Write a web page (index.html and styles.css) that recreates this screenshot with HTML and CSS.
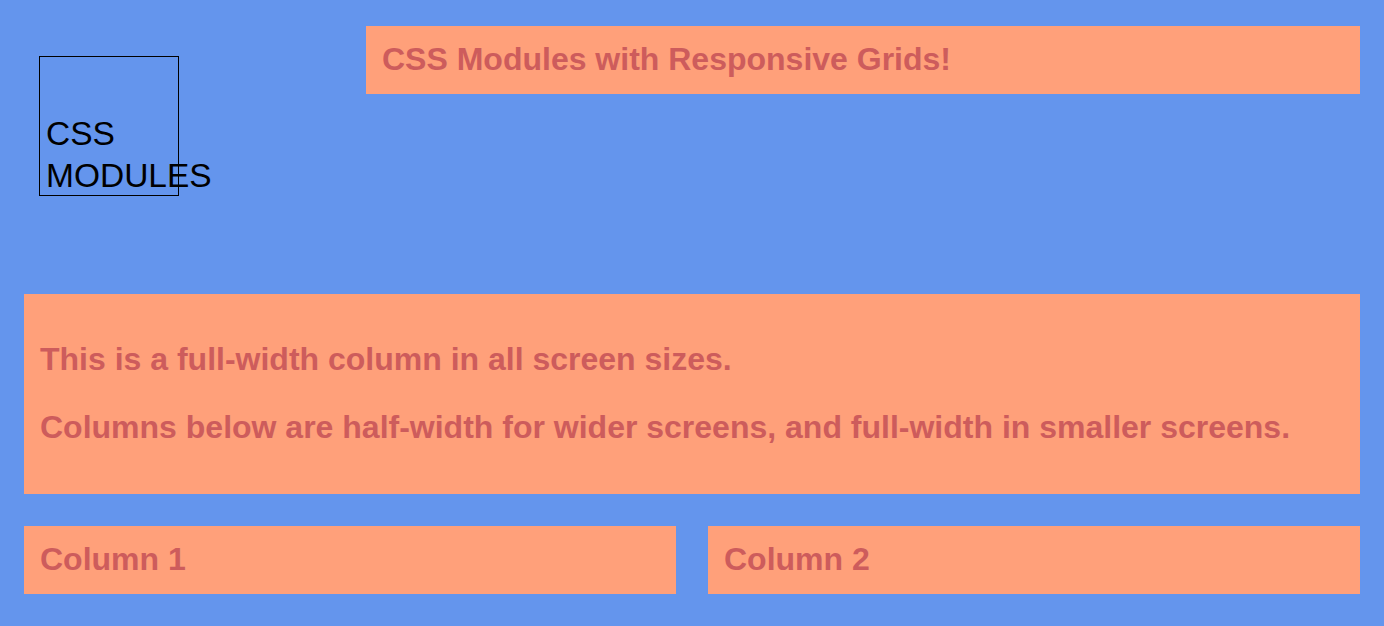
FILE: index.html
```html
<!DOCTYPE html>
<html>
<head>
<meta charset="utf-8">
<link rel="stylesheet" href="styles.css">
</head>
<body>
<div class="page">
  <div class="grid">
    <div class="logo-cell">
      <div class="logo">CSS MODULES</div>
    </div>
    <div class="box header">
      <h1 class="title">CSS Modules with Responsive Grids!</h1>
    </div>
    <div class="box full">
      <p class="text">This is a full-width column in all screen sizes.</p>
      <p class="text">Columns below are half-width for wider screens, and full-width in smaller screens.</p>
    </div>
    <div class="box half">
      <h2 class="title">Column 1</h2>
    </div>
    <div class="box half">
      <h2 class="title">Column 2</h2>
    </div>
  </div>
</div>
</body>
</html>
```
FILE: styles.css
```css
html, body {
  margin: 0;
  padding: 0;
  background: #6495ED;
  font-family: "Liberation Sans", Arial, Helvetica, sans-serif;
}

.page {
  padding: 26px 24px 32px;
}

.grid {
  display: grid;
  grid-template-columns: repeat(12, 1fr);
  column-gap: 32px;
  row-gap: 32px;
  align-items: start;
}

.logo-cell {
  grid-column: span 3;
  padding: 30px 0 66px 15px;
}

.logo {
  box-sizing: border-box;
  width: 140px;
  height: 140px;
  border: 1px solid #000;
  padding: 56px 0 0 6px;
  font-size: 33.5px;
  line-height: 42px;
  color: #000;
}

.box {
  background: #FFA07A;
  color: #CD5C5C;
  padding: 15px 16px 17px;
}

.header {
  grid-column: span 9;
}

.full {
  grid-column: span 12;
}

.half {
  grid-column: span 6;
}

.title {
  margin: 0;
  font-size: 32px;
  line-height: 36px;
  font-weight: bold;
}

.text {
  margin: 32px 0;
  font-size: 32px;
  line-height: 36px;
  font-weight: bold;
}
```
